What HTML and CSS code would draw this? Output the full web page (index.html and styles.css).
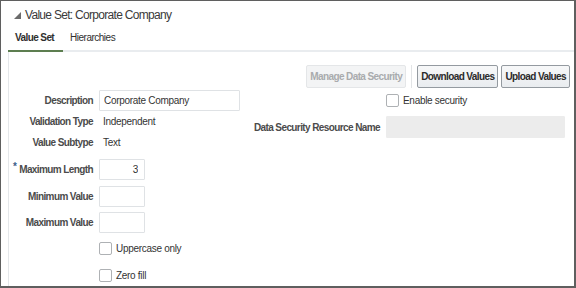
FILE: index.html
```html
<!DOCTYPE html>
<html lang="en">
<head>
    <meta charset="UTF-8">
    <title>Value Set: Corporate Company</title>
    <link rel="stylesheet" href="styles.css">
</head>
<body>
    <div class="frame">
        <div class="header">
            <h1 class="title"><span class="disclose"></span>Value Set: Corporate Company</h1>
            <div class="tabs">
                <div class="tab active">Value Set</div>
                <div class="tab">Hierarchies</div>
            </div>
        </div>

        <div class="content">
            <div class="toolbar">
                <button class="btn" disabled>Manage Data Security</button>
                <span class="sep"></span>
                <button class="btn">Download Values</button>
                <button class="btn">Upload Values</button>
            </div>

            <div class="form">
                <div class="form-left">
                    <label class="label">Description</label>
                    <div class="field"><input class="input wide" type="text" value="Corporate Company"></div>

                    <label class="label">Validation Type</label>
                    <div class="field value">Independent</div>

                    <label class="label">Value Subtype</label>
                    <div class="field value">Text</div>

                    <div class="spacer"></div>

                    <label class="label required"><span class="star">*</span>Maximum Length</label>
                    <div class="field"><input class="input short num" type="text" value="3"></div>

                    <label class="label">Minimum Value</label>
                    <div class="field"><input class="input short" type="text"></div>

                    <label class="label">Maximum Value</label>
                    <div class="field"><input class="input short" type="text"></div>

                    <span></span>
                    <div class="field"><span class="check"></span>Uppercase only</div>

                    <span></span>
                    <div class="field"><span class="check"></span>Zero fill</div>
                </div>

                <div class="form-right">
                    <span></span>
                    <div class="field"><span class="check"></span>Enable security</div>

                    <label class="label">Data Security Resource Name</label>
                    <div class="field"><input class="input readonly" type="text" disabled></div>
                </div>
            </div>
        </div>
    </div>
</body>
</html>
```

FILE: styles.css
```css
:root {
    --frame: #5f5f5f;
    --text: #333333;
    --label: #4b4b4b;
    --line: #e9ecef;
    --green: #5d7e50;
    --field-border: #dfe2e5;
}

* {
    margin: 0;
    padding: 0;
    box-sizing: border-box;
}

body {
    font-family: "Liberation Sans", Arial, sans-serif;
    font-size: 10px;
    letter-spacing: -0.3px;
    color: var(--text);
    background: white;
}

.frame {
    width: 576px;
    height: 288px;
    border-top: 1px solid var(--frame);
    border-left: 1px solid var(--frame);
    border-right: 2px solid var(--frame);
    border-bottom: 2px solid var(--frame);
    overflow: hidden;
}

.header {
    padding-left: 7px;
}

.title {
    display: flex;
    align-items: center;
    height: 28px;
    padding-left: 6px;
    font-size: 12px;
    font-weight: normal;
    letter-spacing: -0.7px;
    color: #3a3a3a;
}

.disclose {
    width: 0;
    height: 0;
    margin-right: 4px;
    border-left: 7px solid transparent;
    border-bottom: 7px solid #6b6b6b;
}

.tabs {
    display: flex;
    height: 23px;
    border-bottom: 2px solid var(--line);
}

.tab {
    padding: 3px 7px 0 7px;
    letter-spacing: -0.5px;
    color: #2f2f2f;
}

.tab.active {
    font-weight: bold;
    letter-spacing: -0.6px;
    border-bottom: 2px solid var(--green);
    margin-bottom: -2px;
    padding-right: 9px;
}

.content {
    margin-left: 7px;
    height: 240px;
    border-left: 1px solid #e4e7ea;
}

.toolbar {
    display: flex;
    justify-content: flex-end;
    align-items: center;
    gap: 3px;
    padding: 13px 4px 0 0;
}

.btn {
    height: 23px;
    padding: 0 3px;
    font-family: inherit;
    font-size: 10px;
    letter-spacing: -0.6px;
    font-weight: bold;
    color: #2b2b2b;
    background: linear-gradient(#f7f8f9, #e9ecef);
    border: 1px solid #949aa0;
    border-radius: 2px;
}

.btn:disabled {
    color: #a9abad;
    background: #f3f4f5;
    border-color: #e4e6e8;
}

.sep {
    width: 1px;
    height: 23px;
    margin: 0 2px;
    background: #e2e4e6;
}

.form {
    display: flex;
    padding-top: 2px;
}

.form-left {
    display: grid;
    grid-template-columns: 84px auto;
    grid-template-rows: 21px 21px 21px 3px 27px 26px 26px 27px 26px;
    column-gap: 6px;
    align-items: center;
    width: 244px;
}

.spacer {
    grid-column: 1 / -1;
}

.form-right {
    display: grid;
    grid-template-columns: 127px 179px;
    grid-template-rows: 21px 22px;
    row-gap: 5px;
    column-gap: 6px;
    align-items: center;
}

.label {
    text-align: right;
    font-weight: bold;
    letter-spacing: -0.6px;
    color: var(--label);
    white-space: nowrap;
}

.star {
    position: relative;
    top: -3px;
    margin-right: 3px;
    color: #3b5e8a;
}

.field {
    display: flex;
    align-items: center;
    white-space: nowrap;
}

.value {
    padding-left: 4px;
}

.input {
    height: 21px;
    padding: 0 4px;
    font-family: inherit;
    font-size: 10px;
    letter-spacing: -0.3px;
    color: var(--text);
    border: 1px solid var(--field-border);
    border-radius: 1px;
    background: white;
}

.input.wide {
    width: 141px;
}

.input.short {
    width: 46px;
}

.input.num {
    text-align: right;
    padding-right: 6px;
}

.input.readonly {
    width: 179px;
    height: 22px;
    background: #ececec;
    border-color: #ececec;
}

.check {
    width: 13px;
    height: 13px;
    margin-right: 4px;
    border: 1px solid #aeb1b4;
    border-radius: 2px;
    background: white;
}
```
